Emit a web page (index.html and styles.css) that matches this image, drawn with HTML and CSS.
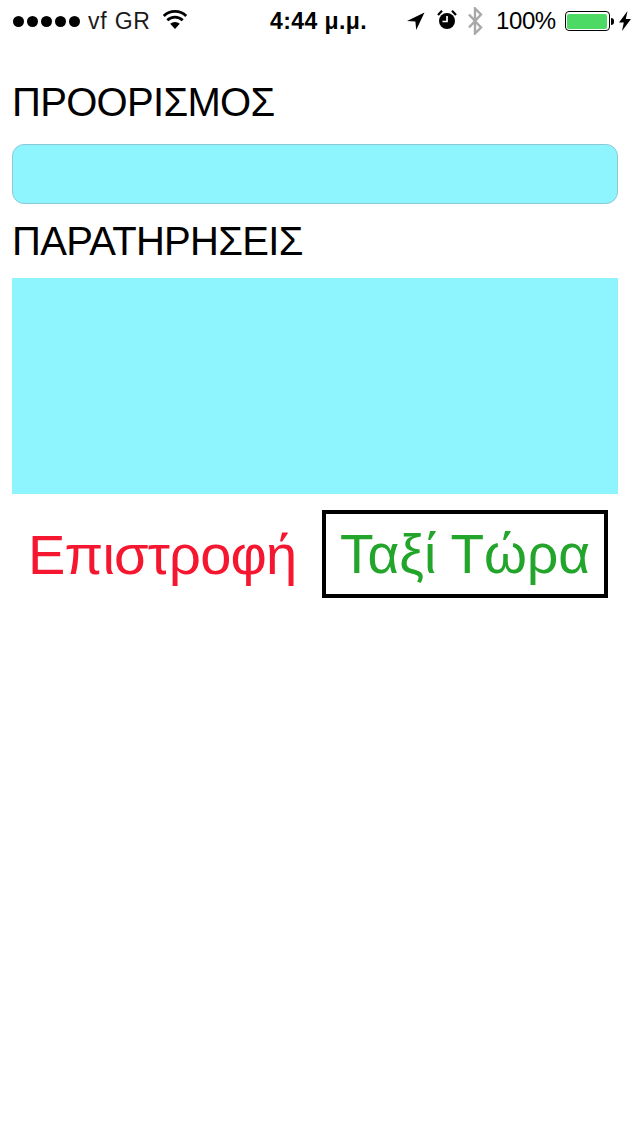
FILE: index.html
```html
<!DOCTYPE html>
<html lang="el">
<head>
<meta charset="utf-8">
<title>Ταξί</title>
<link rel="stylesheet" href="styles.css">
</head>
<body>
<header class="status">
  <div class="status-left">
    <span class="dots"><i></i><i></i><i></i><i></i><i></i></span>
    <span class="carrier">vf GR</span>
    <svg class="wifi" width="26" height="20" viewBox="0 0 26 20"><path d="M13 20 8.200 14.800a7 7 0 0 1 9.600 0Z" fill="#000"/><path d="M5.300 11.300a11 11 0 0 1 15.400 0M1.800 7a16 16 0 0 1 22.400 0" fill="none" stroke="#000" stroke-width="2.800"/></svg>
  </div>
  <div class="status-time">4:44 μ.μ.</div>
  <div class="status-right">
    <svg class="loc" width="18" height="18" viewBox="0 0 18 18"><path d="M17.5.5 0 9l8.4.6.8 8.4Z" fill="#000"/></svg>
    <svg class="alarm" width="20" height="22" viewBox="0 0 20 22"><circle cx="10" cy="12" r="8" fill="#000"/><path d="M10 7v5.500H5.500" fill="none" stroke="#fff" stroke-width="1.700"/><path d="M1 6 5 1.800M19 6l-4-4.200" stroke="#000" stroke-width="2.200"/></svg>
    <svg class="bt" width="16" height="28" viewBox="0 0 16 28"><path d="M2 7.500l12 13-6 6V1.500l6 6-12 13" fill="none" stroke="#a8a8a8" stroke-width="2.400"/></svg>
    <span class="pct">100%</span>
    <span class="battery"><span class="battery-fill"></span></span>
    <span class="battery-tip"></span>
    <svg class="bolt" width="12" height="20" viewBox="0 0 12 20"><path d="M8.500 0 0 11.500h4.800L3 20l9-12H6.800Z" fill="#000"/></svg>
  </div>
</header>
<main class="content">
  <label class="label label-first">ΠΡΟΟΡΙΣΜΟΣ</label>
  <div class="field"></div>
  <label class="label label-second">ΠΑΡΑΤΗΡΗΣΕΙΣ</label>
  <div class="area"></div>
  <div class="actions">
    <span class="back">Επιστροφή</span>
    <span class="taxi">Ταξί Τώρα</span>
  </div>
</main>
</body>
</html>
```
FILE: styles.css
```css
* { box-sizing: border-box; }
html, body { margin: 0; padding: 0; }
body { width: 640px; height: 1136px; background: #fff; color: #000; font-family: "Liberation Sans", Arial, sans-serif; overflow: hidden; }
.status { height: 40px; display: flex; align-items: center; position: relative; padding: 2px 0 0 13px; }
.status-left { display: flex; align-items: center; width: 257px; }
.dots { display: flex; gap: 3px; }
.dots i { width: 11px; height: 11px; border-radius: 50%; background: #000; display: block; }
.carrier { font-size: 23px; margin-left: 8px; letter-spacing: .8px; color: #1a1a1a; }
.wifi { margin-left: 11px; margin-top: -4px; }
.status-time { font-size: 23px; font-weight: 700; width: 130px; letter-spacing: .4px; }
.status-right { display: flex; align-items: center; margin-left: 7px; }
.loc { margin-right: 12px; }
.alarm { margin-right: 10px; margin-top: -3px; }
.bt { margin-right: 13px; }
.pct { font-size: 24px; margin-right: 9px; letter-spacing: -.4px; }
.battery { width: 45px; height: 20px; border: 1.5px solid #000; border-radius: 4px; padding: 1.500px; display: block; }
.battery-fill { display: block; height: 100%; background: #4cd964; border-radius: 2px; }
.battery-tip { width: 3px; height: 7px; background: #000; border-radius: 0 3px 3px 0; margin-left: 1px; margin-right: 5px; }
.content { padding: 0 22px 0 12px; }
.label { display: block; font-size: 40px; line-height: 46px; letter-spacing: -.7px; }
.label-first { margin-top: 39px; }
.field { height: 60px; margin-top: 19px; background: #8ef5ff; border: 1px solid #8cc9d6; border-radius: 12px; }
.label-second { margin-top: 14px; }
.area { height: 216px; margin-top: 14px; background: #8ef5ff; }
.actions { display: flex; align-items: center; margin-top: 16px; }
.back { width: 310px; padding-left: 16px; font-size: 56px; color: #f5172f; letter-spacing: -.8px; white-space: nowrap; }
.taxi { width: 286px; height: 88px; border: 4px solid #000; font-size: 55px; color: #22a52a; line-height: 80px; text-align: center; white-space: nowrap; }
```
